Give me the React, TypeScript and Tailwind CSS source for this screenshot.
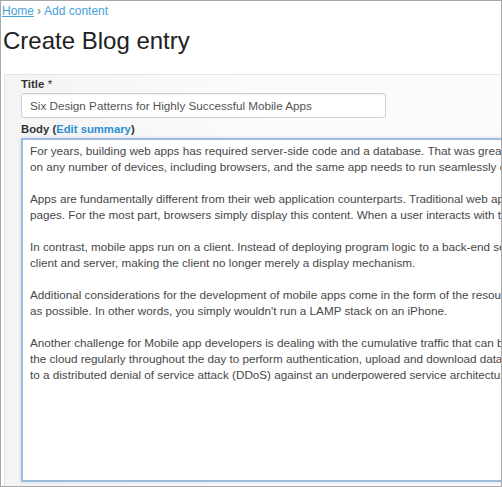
const paragraphs = [
  [
    'For years, building web apps has required server-side code and a database. That was great for the desktop,',
    'on any number of devices, including browsers, and the same app needs to run seamlessly on each of them.',
  ],
  [
    'Apps are fundamentally different from their web application counterparts. Traditional web applications serve',
    'pages. For the most part, browsers simply display this content. When a user interacts with the page, the',
  ],
  [
    'In contrast, mobile apps run on a client. Instead of deploying program logic to a back-end server, logic is split',
    'client and server, making the client no longer merely a display mechanism.',
  ],
  [
    'Additional considerations for the development of mobile apps come in the form of the resource constraints',
    "as possible. In other words, you simply wouldn't run a LAMP stack on an iPhone.",
  ],
  [
    'Another challenge for Mobile app developers is dealing with the cumulative traffic that can be generated by',
    'the cloud regularly throughout the day to perform authentication, upload and download data, and so on,',
    'to a distributed denial of service attack (DDoS) against an underpowered service architecture.',
  ],
]

export default function App() {
  return (
    <div className="w-[502px] h-[487px] overflow-hidden bg-white border border-[#a8a8a8] font-['Liberation_Sans',Arial,sans-serif]">
      {/* Breadcrumb */}
      <nav className="pt-[2px] pl-[1px] text-[12px] leading-[16px] text-[#45a3dc]">
        <a href="#" className="underline">Home</a>
        <span className="text-[#777] mx-[3px]">›</span>
        <a href="#">Add content</a>
      </nav>

      <h1 className="mt-[8px] pl-[2px] text-[24px] leading-[28px] text-[#222]">Create Blog entry</h1>

      {/* Form panel */}
      <div className="mt-[19px] ml-[3px] w-[520px] border-t border-l border-[#e6e6e6] bg-gradient-to-r from-[#f4f4f4] via-[#fcfcfc] to-[#fcfcfc] pl-[16px] pt-[1px] pb-[4px]">
        <label className="block text-[11.5px] leading-[16px] font-bold text-[#333]">
          Title <span className="font-normal">*</span>
        </label>
        <div className="mt-[1px] w-[365px] h-[25px] rounded-[3px] border border-[#cfcfcf] bg-white pl-[8px] flex items-center text-[11.7px] text-[#555] shadow-[inset_0_1px_1px_rgba(0,0,0,0.06)]">
          Six Design Patterns for Highly Successful Mobile Apps
        </div>

        <div className="mt-[3px] text-[11.3px] leading-[16px] font-bold text-[#333]">
          Body (<a href="#" className="text-[#2a8fd0]">Edit summary</a>)
        </div>

        <div className="mt-[1px] h-[344px] w-[500px] border-2 border-[#9dbde0] bg-white pl-[7px] pt-[3px] overflow-hidden shadow-[0_0_3px_rgba(120,150,190,0.35)]">
          <div className="text-[11.7px] leading-[16px] text-[#484848] whitespace-nowrap">
            {paragraphs.map((lines, i) => (
              <div key={i} className={i > 0 ? 'mt-[16px]' : ''}>
                {lines.map((line, j) => (
                  <div key={j}>{line}</div>
                ))}
              </div>
            ))}
          </div>
        </div>
      </div>
    </div>
  )
}
